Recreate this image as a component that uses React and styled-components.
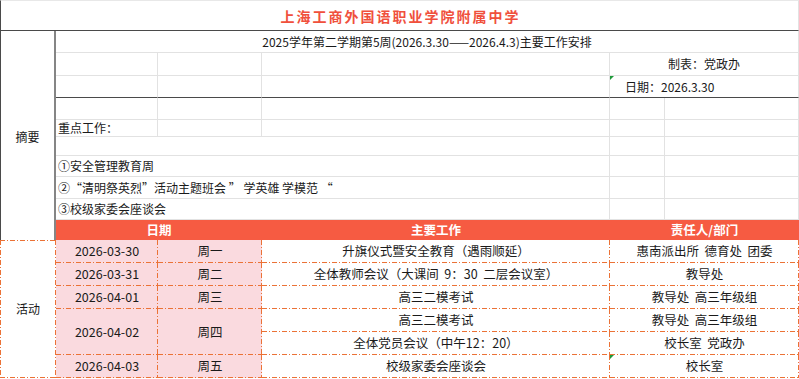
import React from 'react';
import styled, { createGlobalStyle, css } from 'styled-components';

const GRID = '#e2e2e2';
const DARK = '#4a4a4a';
const ORANGE = '#eb7236';
const PINK = '#fadadf';
const RED = '#f65b42';

const GlobalStyle = createGlobalStyle`
  html, body {
    margin: 0;
    padding: 0;
    background: #fff;
  }
  body {
    font-family: "Noto Sans CJK SC", "Noto Sans", sans-serif;
    color: #1a1a1a;
  }
`;

// dash-dot line like the spreadsheet's "dash dot" border
const dashLine = (dir) =>
  `repeating-linear-gradient(${dir}, ${ORANGE} 0 5px, transparent 5px 7px, ${ORANGE} 7px 8px, transparent 8px 10px)`;

const Sheet = styled.div`
  display: grid;
  grid-template-columns: 56px 102px 104px 348px 55px 134px;
  grid-template-rows: 31px 22px 23px 22px 22px 17px 19px 21px 22px 21px 20px repeat(6, 23px);
  width: 799px;
  font-size: 12px;
`;

const Cell = styled.div`
  box-sizing: border-box;
  display: flex;
  align-items: center;
  justify-content: ${(p) => (p.$align === 'left' ? 'flex-start' : 'center')};
  padding-left: ${(p) => p.$pad || 0}px;
  grid-column: span ${(p) => p.$cs || 1};
  grid-row: span ${(p) => p.$rs || 1};
  white-space: pre;
  overflow: visible;
  position: relative;
  border-right: 1px solid ${GRID};
  border-bottom: 1px solid ${(p) => (p.$dark ? DARK : GRID)};
  line-height: 1;

  ${(p) =>
    p.$note &&
    css`
      &::before {
        content: '';
        position: absolute;
        left: 0;
        top: 0;
        border-top: 4px solid #1f9a3a;
        border-right: 4px solid transparent;
      }
    `}
`;

const Title = styled(Cell)`
  grid-column: 1 / -1;
  border-left: 1px solid ${DARK};
  border-top: 1px solid #e8e8e8;
  border-bottom: 1px solid ${DARK};
  color: #f0503c;
  font-size: 14px;
  font-weight: 700;
  letter-spacing: 2px;
  padding-left: 2px;
`;

const SideLabel = styled(Cell)`
  border-left: 1px solid ${DARK};
  border-right: 2px solid #858585;
  border-bottom: none;
  font-size: 12px;
  padding-top: 2px;
`;

const HeadCell = styled(Cell)`
  background: ${RED};
  color: #fff;
  font-weight: 700;
  border: none;
  font-size: 12.5px;
`;

const ActCell = styled(Cell)`
  border: none;
  background: ${(p) => (p.$pink ? PINK : '#fff')};
  background-image: ${dashLine('90deg')}, ${dashLine('180deg')};
  background-size: 100% 1px, 1px 100%;
  background-position: left bottom, right top;
  background-repeat: no-repeat;
  font-size: 12.5px;
`;

const ActLabel = styled(ActCell)`
  background-image: ${dashLine('90deg')}, ${dashLine('180deg')}, ${dashLine('90deg')},
    ${dashLine('180deg')};
  background-size: 100% 1px, 1px 100%, 100% 1px, 1px 100%;
  background-position: left bottom, right top, left top, left top;
  font-size: 12px;
`;

const activities = [
  { date: '2026-03-30', week: '周一', items: [['升旗仪式暨安全教育（遇雨顺延）', '惠南派出所  德育处  团委']] },
  { date: '2026-03-31', week: '周二', items: [['全体教师会议（大课间  9：30  二层会议室）', '教导处']] },
  { date: '2026-04-01', week: '周三', items: [['高三二模考试', '教导处  高三年级组']] },
  {
    date: '2026-04-02',
    week: '周四',
    items: [
      ['高三二模考试', '教导处  高三年级组'],
      ['全体党员会议（中午12：20）', '校长室  党政办'],
    ],
  },
  { date: '2026-04-03', week: '周五', items: [['校级家委会座谈会', '校长室']], note: true },
];

const points = ['', '①安全管理教育周', '②“清明祭英烈”活动主题班会 ” 学英雄 学模范 “', '③校级家委会座谈会'];

export default function App() {
  return (
    <>
      <GlobalStyle />
      <Sheet>
        <Title>上海工商外国语职业学院附属中学</Title>

        <SideLabel $rs={10}>摘要</SideLabel>
        <Cell $cs={5}>2025学年第二学期第5周(2026.3.30——2026.4.3)主要工作安排</Cell>

        <Cell />
        <Cell />
        <Cell />
        <Cell $cs={2}>制表：党政办</Cell>

        <Cell $dark />
        <Cell $dark />
        <Cell $dark />
        <Cell $cs={2} $dark $align="left" $pad={15} $note>
          日期：2026.3.30
        </Cell>

        <Cell />
        <Cell />
        <Cell />
        <Cell />
        <Cell />

        <Cell $align="left" $pad={2}>
          重点工作：
        </Cell>
        <Cell />
        <Cell />
        <Cell />
        <Cell />

        {points.map((t, i) => (
          <React.Fragment key={i}>
            <Cell $cs={3} $align="left" $pad={2}>
              {t}
            </Cell>
            <Cell />
            <Cell />
          </React.Fragment>
        ))}

        <HeadCell $cs={2}>日期</HeadCell>
        <HeadCell>主要工作</HeadCell>
        <HeadCell $cs={2}>责任人/部门</HeadCell>

        <ActLabel $rs={6}>活动</ActLabel>
        {activities.map((a) =>
          a.items.map((it, j) => (
            <React.Fragment key={a.date + j}>
              {j === 0 && (
                <>
                  <ActCell $pink $rs={a.items.length}>
                    {a.date}
                  </ActCell>
                  <ActCell $pink $rs={a.items.length}>
                    {a.week}
                  </ActCell>
                </>
              )}
              <ActCell>{it[0]}</ActCell>
              <ActCell $cs={2} $note={a.note}>
                {it[1]}
              </ActCell>
            </React.Fragment>
          ))
        )}
      </Sheet>
    </>
  );
}
